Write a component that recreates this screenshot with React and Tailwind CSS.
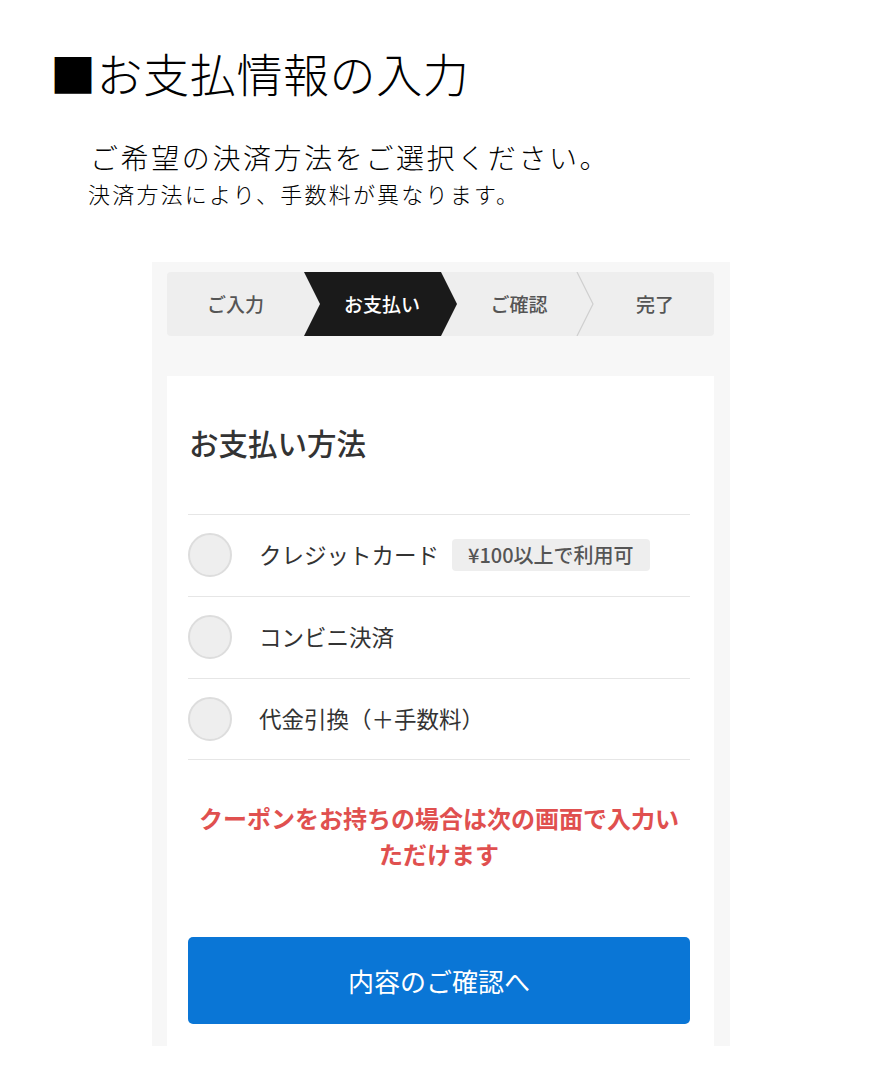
import React from 'react';

const font = { fontFamily: '"Noto Sans CJK JP", "Noto Sans", sans-serif' };

const steps = [
  { label: 'ご入力', cls: 'w-[137px]' },
  { label: 'お支払い', cls: 'w-[137px] pl-[19px]' },
  { label: 'ご確認', cls: 'w-[136px] pl-[20px]' },
  { label: '完了', cls: 'w-[137px] pl-[19px]' },
];

const methods = [
  { label: 'クレジットカード', badge: '¥100以上で利用可' },
  { label: 'コンビニ決済' },
  { label: '代金引換（＋手数料）' },
];

const StepBar = () => (
  <div className="relative flex h-[64px] w-[547px] rounded-[4px] bg-[#eeeeee]">
    <svg className="absolute left-0 top-0" width="547" height="64" viewBox="0 0 547 64">
      <polygon points="137,0 274,0 290,32 274,64 137,64 153,32" fill="#1a1a1a" />
      <polyline points="410,0 426,32 410,64" fill="none" stroke="#cfcfcf" strokeWidth="1.2" />
    </svg>
    {steps.map((s, i) => (
      <div
        key={s.label}
        className={`relative flex shrink-0 items-center justify-center text-[19px] font-medium ${s.cls} ${i === 1 ? 'text-white' : 'text-[#555555]'}`}
      >
        {s.label}
      </div>
    ))}
  </div>
);

const MethodRow = ({ label, badge, last }) => (
  <div className={`flex h-[82px] items-center border-t border-[#e6e6e6] ${last ? 'border-b' : ''}`}>
    <span className="h-[44px] w-[44px] shrink-0 rounded-full border-2 border-[#dddddd] bg-[#eeeeee]" />
    <span className="ml-[27px] text-[22.5px] text-[#333333]">{label}</span>
    {badge && (
      <span className="ml-[13px] flex h-[32px] items-center rounded-[4px] bg-[#eeeeee] px-[16px] text-[20px] font-medium text-[#555555]">
        {badge}
      </span>
    )}
  </div>
);

export default function App() {
  return (
    <div className="min-h-[1092px] w-[874px] bg-white" style={font}>
      <h1 className="pl-[50px] pt-[49px] text-[46px] font-light leading-none tracking-[0.6px] text-black">
        ■お支払情報の入力
      </h1>

      <div className="pl-[90px] pt-[48px] text-black">
        <p className="text-[28px] font-light leading-none tracking-[2.6px]">ご希望の決済方法をご選択ください。</p>
        <p className="-ml-[2px] mt-[11px] text-[22px] font-light leading-none tracking-[2.2px]">決済方法により、手数料が異なります。</p>
      </div>

      <div className="ml-[152px] mt-[58px] w-[578px] bg-[#f7f7f7] px-[15px] pt-[10px]">
        <StepBar />

        <div className="mt-[40px] w-[547px] bg-white pb-[22px] pl-[21px] pr-[24px] pt-[52px]">
          <h2 className="pl-[1px] text-[29.5px] font-medium leading-none text-[#333333]">お支払い方法</h2>

          <div className="mt-[56px]">
            {methods.map((m, i) => (
              <MethodRow key={m.label} {...m} last={i === methods.length - 1} />
            ))}
          </div>

          <p className="mt-[40px] text-center text-[24px] font-semibold leading-[36px] text-[#e0504f]">
            クーポンをお持ちの場合は次の画面で入力いただけます
          </p>

          <button className="mt-[65px] flex h-[87px] w-full items-center justify-center rounded-[5px] bg-[#0a76d6] text-[26px] text-white">
            内容のご確認へ
          </button>
        </div>
      </div>
    </div>
  );
}
